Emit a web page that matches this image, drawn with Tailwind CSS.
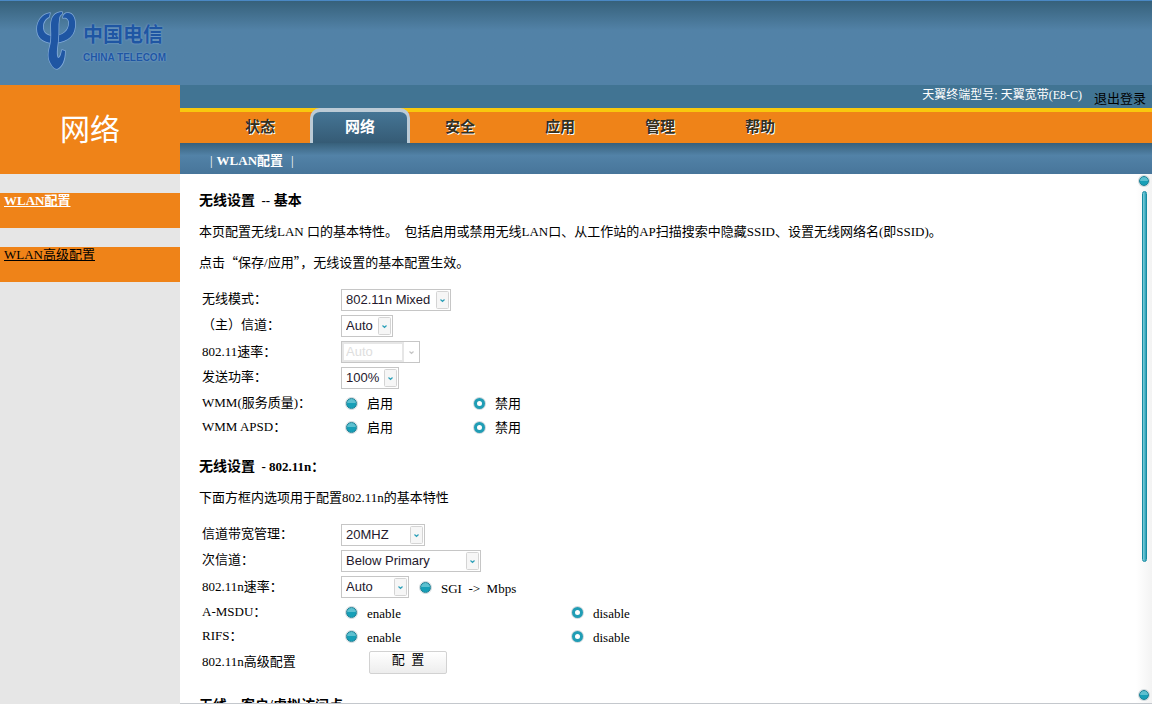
<!DOCTYPE html>
<html lang="zh-CN">
<head>
<meta charset="utf-8">
<meta name="viewport" content="width=device-width, initial-scale=1">
<title>WLAN配置</title>
<script src="https://cdn.jsdelivr.net/npm/@tailwindcss/browser@4"></script>
</head>
<body class="flex h-screen flex-col overflow-hidden bg-white font-['Liberation_Serif','Noto_Sans_CJK_SC',serif] text-[13px] leading-5 text-black">

<header class="flex h-[85px] shrink-0 items-start border-t border-[#4a88c4] bg-linear-to-b from-[#36617b] to-[#5282a7] to-35% pl-9">
  <a href="#" class="flex items-start pt-[10px] text-[#1f56a3]">
    <svg class="h-[60px] w-[42px]" viewBox="0 0 42 60" aria-hidden="true">
      <g fill="#1f56a3" stroke="#7fa8d8" stroke-width="1.500" stroke-linejoin="round" paint-order="stroke">
        <path d="M14 2C6 3 1 10 1 18c0 8 5 13 15 14 12 0 22-5 23-16 1-8-2-14-7-14-3 0-5 2-5 5 3-1 6 1 6 5 0 8-7 13-15 13C11 25 7 22 7 16c0-5 2-8 6-10z"/>
        <path d="M26 1c-7 0-11 5-11 13 0 8 1 14-1 21-2 7-2 12 0 16 2 4 4 7 7 7 5-2 8-9 8-18l-3-1c-1 5-2 8-4 8-2-3-1-9 0-17 1-9 0-16 1-21 0-3 1-5 3-6z"/>
      </g>
    </svg>
    <span class="flex flex-col pl-[5px] pt-[8px]">
      <span class="font-['Noto_Sans_CJK_SC',sans-serif] text-[20px] font-bold leading-[30px] [text-shadow:0_0_2px_#86addb]">中国电信</span>
      <span class="pt-[3px] font-['Liberation_Sans',sans-serif] text-[10px] font-bold leading-3 [text-shadow:0_0_2px_#86addb]">CHINA TELECOM</span>
    </span>
  </a>
</header>

<div class="flex min-h-0 flex-1">
  <aside class="flex w-[180px] shrink-0 flex-col bg-[#e6e6e6]">
    <h1 class="flex h-[89px] items-center justify-center bg-[#ef8318] text-[30px] text-white">网络</h1>
    <nav class="flex flex-col gap-[19px] pt-[19px]">
      <div class="h-[35px] bg-[#ef8318] px-1"><a href="#" class="block leading-4 font-bold text-white underline">WLAN配置</a></div>
      <div class="h-[35px] bg-[#ef8318] px-1"><a href="#" class="block leading-4 underline">WLAN高级配置</a></div>
    </nav>
  </aside>

  <div class="flex min-w-0 flex-1 flex-col">
    <div class="flex h-[23px] shrink-0 items-start justify-end gap-3 bg-[#417493] pr-[6px]">
      <span class="text-[12px] text-white">天翼终端型号: 天翼宽带(E8-C)</span>
      <a href="#" class="pt-1">退出登录</a>
    </div>

    <nav class="flex h-[35px] shrink-0 border-t-4 border-[#f9c80e] bg-[#ef8318] pl-[30px] text-[15px] leading-[30px] font-bold text-[#33301f]">
      <a href="#" class="w-[100px] text-center [text-shadow:1px_1px_0_#fff]">状态</a>
      <a href="#" class="-mt-1 h-[35px] w-[100px] rounded-t-[10px] border-x-3 border-t-4 border-[#bccbd6] bg-linear-to-b from-[#457595] to-[#355b75] text-center text-white">网络</a>
      <a href="#" class="w-[100px] text-center [text-shadow:1px_1px_0_#fff]">安全</a>
      <a href="#" class="w-[100px] text-center [text-shadow:1px_1px_0_#fff]">应用</a>
      <a href="#" class="w-[100px] text-center [text-shadow:1px_1px_0_#fff]">管理</a>
      <a href="#" class="w-[100px] text-center [text-shadow:1px_1px_0_#fff]">帮助</a>
    </nav>

    <nav class="flex h-[31px] shrink-0 items-center gap-[4px] bg-linear-to-b from-[#37607a] via-[#5282a7] via-40% to-[#47759a] pt-1 pl-[30px] text-white">
      <span>|</span><a href="#" class="font-bold">WLAN配置</a><span class="pl-1">|</span>
    </nav>

    <div class="flex min-h-0 flex-1 border-b border-[#c4c8cd]">
      <main class="min-w-0 flex-1 overflow-hidden pt-[17px] pl-[19px]">
        <h2 class="font-bold whitespace-pre"><span class="text-[14px]">无线设置</span>  --<span class="text-[14px]"> 基本</span></h2>
        <p class="mt-[11px]">本页配置无线LAN 口的基本特性。&nbsp; 包括启用或禁用无线LAN口、从工作站的AP扫描搜索中隐藏SSID、设置无线网络名(即SSID)。</p>
        <p class="mt-[10px]">点击<span class="font-['Noto_Sans_CJK_SC',sans-serif]">“</span>保存/应用<span class="font-['Noto_Sans_CJK_SC',sans-serif]">”</span>，无线设置的基本配置生效。</p>

        <form class="mt-[14px] pl-[3px]">
          <div class="flex h-[26px] items-center">
            <label for="mode" class="w-[139px] pb-[2px]">无线模式：</label>
            <span class="relative"><select id="mode" class="block h-[22px] w-[110px] appearance-none border border-[#c6c6c6] bg-white pl-1 font-['Liberation_Sans',sans-serif] text-[13px] text-[#24182c]"><option>802.11n Mixed</option></select>
            <svg class="pointer-events-none absolute top-[2px] right-[2px] h-[18px] w-[13px]" viewBox="0 0 13 18" aria-hidden="true"><rect x=".5" y=".5" width="12" height="17" rx="1" fill="#f6f6f6" stroke="#d4d4d4"/><path d="M4.500 8.500l2 2L8.500 8.500" fill="none" stroke="#2b9fb8" stroke-width="1.200"/></svg></span>
          </div>
          <div class="flex h-[26px] items-center">
            <label for="channel" class="w-[139px] pb-[2px]">（主）信道：</label>
            <span class="relative"><select id="channel" class="block h-[22px] w-[52px] appearance-none border border-[#c6c6c6] bg-white pl-1 font-['Liberation_Sans',sans-serif] text-[13px] text-[#24182c]"><option>Auto</option></select>
            <svg class="pointer-events-none absolute top-[2px] right-[2px] h-[18px] w-[13px]" viewBox="0 0 13 18" aria-hidden="true"><rect x=".5" y=".5" width="12" height="17" rx="1" fill="#f6f6f6" stroke="#d4d4d4"/><path d="M4.500 8.500l2 2L8.500 8.500" fill="none" stroke="#2b9fb8" stroke-width="1.200"/></svg></span>
          </div>
          <div class="flex h-[26px] items-center">
            <label for="rate" class="w-[139px]">802.11速率：</label>
            <span class="relative"><select id="rate" disabled class="block h-[22px] w-[79px] appearance-none border border-[#c6c6c6] bg-white pl-1 font-['Liberation_Sans',sans-serif] text-[13px] text-[#dedede] opacity-100"><option>Auto</option></select>
            <span class="pointer-events-none absolute top-[1px] left-[1px] h-5 w-[62px] border-2 border-[#e6e6e6]"></span>
            <svg class="pointer-events-none absolute top-[2px] right-[2px] h-[18px] w-[13px]" viewBox="0 0 13 18" aria-hidden="true"><path d="M4.500 8.500l2 2L8.500 8.500" fill="none" stroke="#c4c4c4" stroke-width="1.200"/></svg></span>
          </div>
          <div class="flex h-[26px] items-center">
            <label for="power" class="w-[139px] pb-[2px]">发送功率：</label>
            <span class="relative"><select id="power" class="block h-[22px] w-[58px] appearance-none border border-[#c6c6c6] bg-white pl-1 font-['Liberation_Sans',sans-serif] text-[13px] text-[#24182c]"><option>100%</option></select>
            <svg class="pointer-events-none absolute top-[2px] right-[2px] h-[18px] w-[13px]" viewBox="0 0 13 18" aria-hidden="true"><rect x=".5" y=".5" width="12" height="17" rx="1" fill="#f6f6f6" stroke="#d4d4d4"/><path d="M4.500 8.500l2 2L8.500 8.500" fill="none" stroke="#2b9fb8" stroke-width="1.200"/></svg></span>
          </div>
          <div role="radiogroup" aria-labelledby="wmm" class="flex h-6 items-center">
            <span id="wmm" class="w-[144px]">WMM(服务质量)：</span>
            <label class="flex w-[128px] items-center gap-[10px]"><input type="radio" name="wmm" class="size-[11px] appearance-none rounded-full border border-[#187f94] bg-linear-to-b from-[#5cc0d0] from-45% to-[#179fb7] to-50% shadow-[0_0_0_1px_#d0d8dc] checked:border-3 checked:border-[#209db5] checked:bg-white checked:bg-none"><span class="pt-[2px]">启用</span></label>
            <label class="flex items-center gap-[10px]"><input type="radio" name="wmm" checked class="size-[11px] appearance-none rounded-full border border-[#187f94] bg-linear-to-b from-[#5cc0d0] from-45% to-[#179fb7] to-50% shadow-[0_0_0_1px_#d0d8dc] checked:border-3 checked:border-[#209db5] checked:bg-white checked:bg-none"><span class="pt-[2px]">禁用</span></label>
          </div>
          <div role="radiogroup" aria-labelledby="apsd" class="flex h-6 items-center">
            <span id="apsd" class="w-[144px]">WMM APSD：</span>
            <label class="flex w-[128px] items-center gap-[10px]"><input type="radio" name="apsd" class="size-[11px] appearance-none rounded-full border border-[#187f94] bg-linear-to-b from-[#5cc0d0] from-45% to-[#179fb7] to-50% shadow-[0_0_0_1px_#d0d8dc] checked:border-3 checked:border-[#209db5] checked:bg-white checked:bg-none"><span class="pt-[2px]">启用</span></label>
            <label class="flex items-center gap-[10px]"><input type="radio" name="apsd" checked class="size-[11px] appearance-none rounded-full border border-[#187f94] bg-linear-to-b from-[#5cc0d0] from-45% to-[#179fb7] to-50% shadow-[0_0_0_1px_#d0d8dc] checked:border-3 checked:border-[#209db5] checked:bg-white checked:bg-none"><span class="pt-[2px]">禁用</span></label>
          </div>
        </form>

        <h2 class="mt-[18px] font-bold whitespace-pre"><span class="text-[14px]">无线设置</span>  - 802.11n：</h2>
        <p class="mt-[11px]">下面方框内选项用于配置802.11n的基本特性</p>

        <form class="mt-[14px] pl-[3px]">
          <div class="flex h-[26px] items-center">
            <label for="bw" class="w-[139px] pb-[2px]">信道带宽管理：</label>
            <span class="relative"><select id="bw" class="block h-[22px] w-[84px] appearance-none border border-[#c6c6c6] bg-white pl-1 font-['Liberation_Sans',sans-serif] text-[13px] text-[#24182c]"><option>20MHZ</option></select>
            <svg class="pointer-events-none absolute top-[2px] right-[2px] h-[18px] w-[13px]" viewBox="0 0 13 18" aria-hidden="true"><rect x=".5" y=".5" width="12" height="17" rx="1" fill="#f6f6f6" stroke="#d4d4d4"/><path d="M4.500 8.500l2 2L8.500 8.500" fill="none" stroke="#2b9fb8" stroke-width="1.200"/></svg></span>
          </div>
          <div class="flex h-[26px] items-center">
            <label for="side" class="w-[139px] pb-[2px]">次信道：</label>
            <span class="relative"><select id="side" class="block h-[22px] w-[140px] appearance-none border border-[#c6c6c6] bg-white pl-1 font-['Liberation_Sans',sans-serif] text-[13px] text-[#24182c]"><option>Below Primary</option></select>
            <svg class="pointer-events-none absolute top-[2px] right-[2px] h-[18px] w-[13px]" viewBox="0 0 13 18" aria-hidden="true"><rect x=".5" y=".5" width="12" height="17" rx="1" fill="#f6f6f6" stroke="#d4d4d4"/><path d="M4.500 8.500l2 2L8.500 8.500" fill="none" stroke="#2b9fb8" stroke-width="1.200"/></svg></span>
          </div>
          <div class="flex h-[26px] items-center">
            <label for="nrate" class="w-[139px]">802.11n速率：</label>
            <span class="relative"><select id="nrate" class="block h-[22px] w-[68px] appearance-none border border-[#c6c6c6] bg-white pl-1 font-['Liberation_Sans',sans-serif] text-[13px] text-[#24182c]"><option>Auto</option></select>
            <svg class="pointer-events-none absolute top-[2px] right-[2px] h-[18px] w-[13px]" viewBox="0 0 13 18" aria-hidden="true"><rect x=".5" y=".5" width="12" height="17" rx="1" fill="#f6f6f6" stroke="#d4d4d4"/><path d="M4.500 8.500l2 2L8.500 8.500" fill="none" stroke="#2b9fb8" stroke-width="1.200"/></svg></span>
            <label class="flex items-center gap-[10px] pl-[11px]"><input type="radio" name="sgi" class="size-[11px] appearance-none rounded-full border border-[#187f94] bg-linear-to-b from-[#5cc0d0] from-45% to-[#179fb7] to-50% shadow-[0_0_0_1px_#d0d8dc] checked:border-3 checked:border-[#209db5] checked:bg-white checked:bg-none"><span class="pt-1 whitespace-pre">SGI  -&gt;  Mbps</span></label>
          </div>
          <div role="radiogroup" aria-labelledby="amsdu" class="flex h-6 items-center">
            <span id="amsdu" class="w-[144px]">A-MSDU：</span>
            <label class="flex w-[226px] items-center gap-[10px]"><input type="radio" name="amsdu" class="size-[11px] appearance-none rounded-full border border-[#187f94] bg-linear-to-b from-[#5cc0d0] from-45% to-[#179fb7] to-50% shadow-[0_0_0_1px_#d0d8dc] checked:border-3 checked:border-[#209db5] checked:bg-white checked:bg-none"><span class="pt-1">enable</span></label>
            <label class="flex items-center gap-[10px]"><input type="radio" name="amsdu" checked class="size-[11px] appearance-none rounded-full border border-[#187f94] bg-linear-to-b from-[#5cc0d0] from-45% to-[#179fb7] to-50% shadow-[0_0_0_1px_#d0d8dc] checked:border-3 checked:border-[#209db5] checked:bg-white checked:bg-none"><span class="pt-1">disable</span></label>
          </div>
          <div role="radiogroup" aria-labelledby="rifs" class="flex h-6 items-center">
            <span id="rifs" class="w-[144px]">RIFS：</span>
            <label class="flex w-[226px] items-center gap-[10px]"><input type="radio" name="rifs" class="size-[11px] appearance-none rounded-full border border-[#187f94] bg-linear-to-b from-[#5cc0d0] from-45% to-[#179fb7] to-50% shadow-[0_0_0_1px_#d0d8dc] checked:border-3 checked:border-[#209db5] checked:bg-white checked:bg-none"><span class="pt-1">enable</span></label>
            <label class="flex items-center gap-[10px]"><input type="radio" name="rifs" checked class="size-[11px] appearance-none rounded-full border border-[#187f94] bg-linear-to-b from-[#5cc0d0] from-45% to-[#179fb7] to-50% shadow-[0_0_0_1px_#d0d8dc] checked:border-3 checked:border-[#209db5] checked:bg-white checked:bg-none"><span class="pt-1">disable</span></label>
          </div>
          <div class="flex h-[28px] items-center">
            <span class="w-[167px]">802.11n高级配置</span>
            <button type="button" class="h-[23px] w-[78px] rounded-xs border border-[#d2d2d2] bg-linear-to-b from-white to-[#ededed] pb-[6px] leading-4 whitespace-pre">配  置</button>
          </div>
        </form>

        <h2 class="mt-[20px] font-bold whitespace-pre"><span class="text-[14px]">无线</span>  - <span class="text-[14px]">客户/虚拟访问点</span></h2>
      </main>

      <div class="flex w-4 shrink-0 flex-col items-center justify-between bg-linear-to-r from-white to-[#f3f3f3] pt-[2px] pb-[3px]" aria-hidden="true">
        <span class="size-[10px] rounded-full border border-[#187f94] bg-linear-to-b from-[#5cc0d0] from-45% to-[#179fb7] to-50% shadow-[0_0_0_1px_#d0d8dc]"></span>
        <span class="flex w-full flex-1 flex-col items-center py-[5px]"><span class="h-3/4 w-[5px] rounded-full border border-[#188ba2] bg-linear-to-r from-[#7fd0dc] to-[#219fb6]"></span></span>
        <span class="size-[10px] rounded-full border border-[#187f94] bg-linear-to-b from-[#5cc0d0] from-45% to-[#179fb7] to-50% shadow-[0_0_0_1px_#d0d8dc]"></span>
      </div>
    </div>
  </div>
</div>
</body>
</html>
